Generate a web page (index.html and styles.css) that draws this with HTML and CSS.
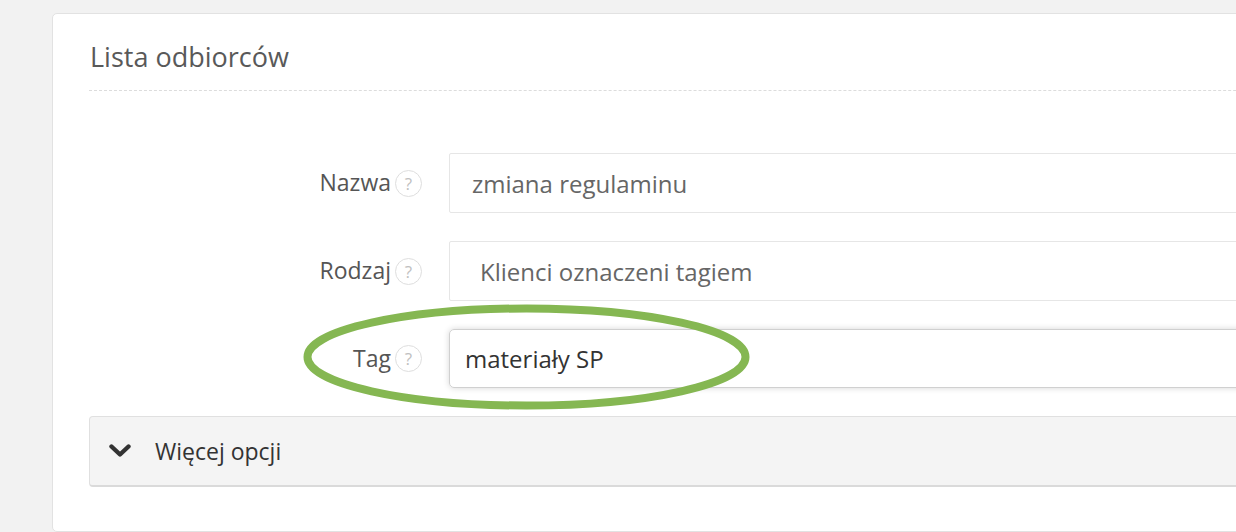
FILE: index.html
```html
<!DOCTYPE html>
<html lang="pl">
<head>
<meta charset="utf-8">
<title>Lista odbiorców</title>
<link rel="stylesheet" href="styles.css">
</head>
<body>
<div class="page">
  <section class="card">
    <h2 class="card-title">Lista odbiorców</h2>
    <div class="form">
      <div class="row">
        <label class="label">Nazwa<span class="help">?</span></label>
        <div class="field">zmiana regulaminu</div>
      </div>
      <div class="row">
        <label class="label">Rodzaj<span class="help">?</span></label>
        <div class="field field-select">Klienci oznaczeni tagiem</div>
      </div>
      <div class="row row-tag">
        <label class="label">Tag<span class="help">?</span></label>
        <div class="field field-active">materiały SP</div>
        <svg class="highlight" width="447" height="106" viewBox="0 0 447 106" aria-hidden="true">
          <ellipse cx="223.5" cy="53" rx="219" ry="48.5" fill="none" stroke="#85b752" stroke-width="8"/>
        </svg>
      </div>
    </div>
    <div class="more">
      <svg class="chevron" width="22" height="14" viewBox="0 0 22 14" aria-hidden="true">
        <path d="M2.5 2.5 L11 10.5 L19.5 2.5" fill="none" stroke="#333" stroke-width="4.4" stroke-linecap="round" stroke-linejoin="round"/>
      </svg>
      <span class="more-text">Więcej opcji</span>
    </div>
  </section>
</div>
</body>
</html>
```

FILE: styles.css
```css
html, body {
  margin: 0;
  padding: 0;
  overflow: hidden;
  background: #f2f2f2;
  font-family: "Open Sans", "Liberation Sans", sans-serif;
}

.page {
  padding: 13px 0 0 52px;
  height: 532px;
  box-sizing: border-box;
}

.card {
  width: 1400px;
  height: 519px;
  box-sizing: border-box;
  background: #fff;
  border: 1px solid #e2e2e2;
  border-radius: 5px;
  padding: 0 0 0 36px;
}

.card-title {
  margin: 0;
  padding: 25px 0 0 1px;
  height: 77px;
  box-sizing: border-box;
  font-size: 27px;
  font-weight: 400;
  color: #595959;
  border-bottom: 1px dashed #dcdcdc;
  line-height: 36px;
}

.form {
  display: flex;
  flex-direction: column;
  gap: 28px;
  padding-top: 62px;
}

.row {
  display: grid;
  grid-template-columns: 333px 1fr;
  column-gap: 27px;
  align-items: center;
  position: relative;
}

.label {
  display: flex;
  justify-content: flex-end;
  align-items: center;
  padding-bottom: 2px;
  font-size: 23px;
  color: #555;
}

.help {
  display: inline-flex;
  align-items: center;
  justify-content: center;
  width: 27px;
  height: 27px;
  box-sizing: border-box;
  margin-left: 4px;
  margin-top: 2px;
  border: 1px solid #dedede;
  border-radius: 50%;
  font-size: 17px;
  color: #c0c0c0;
  line-height: 1;
}

.field {
  height: 60px;
  box-sizing: border-box;
  border: 1px solid #e6e6e6;
  border-radius: 2px;
  padding: 0 22px;
  display: flex;
  align-items: center;
  font-size: 24px;
  color: #666;
}

.field-select {
  padding-left: 30px;
}

.field-active {
  height: 59px;
  border-color: #d0d0d0;
  border-radius: 5px;
  padding-left: 15px;
  color: #333;
  box-shadow: 0 0 6px rgba(0, 0, 0, 0.16);
}

.highlight {
  position: absolute;
  left: 214px;
  top: -25px;
  pointer-events: none;
}

.more {
  margin-top: 28px;
  height: 71px;
  box-sizing: border-box;
  background: #f4f4f4;
  border: 1px solid #e0e0e0;
  border-bottom: 2px solid #dadada;
  border-radius: 4px;
  display: flex;
  align-items: center;
  padding-left: 19px;
  gap: 24px;
}

.chevron {
  display: block;
}

.more-text {
  font-size: 23px;
  color: #333;
}
```
